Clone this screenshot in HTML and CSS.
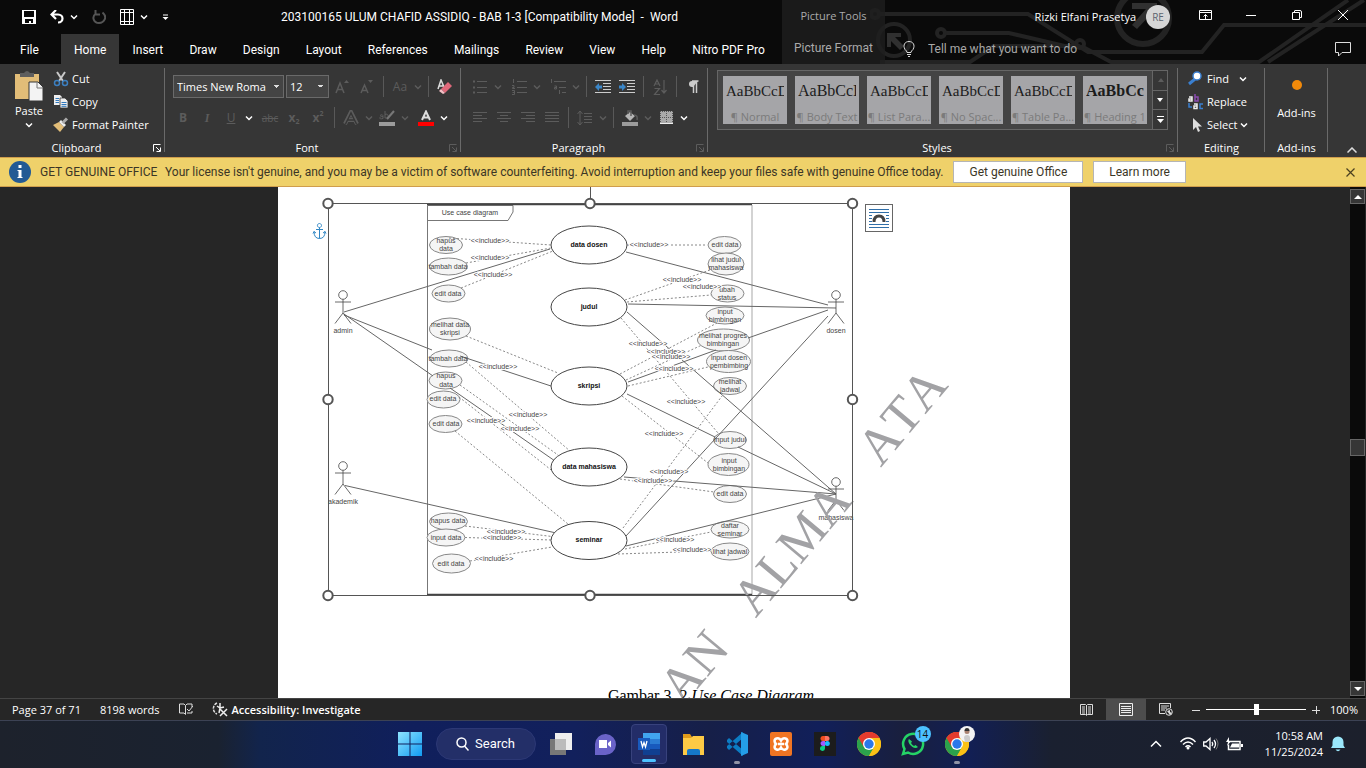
FILE: index.html
```html
<!DOCTYPE html>
<html lang="en">
<head>
<meta charset="utf-8">
<meta name="viewport" content="width=device-width, initial-scale=1">
<title>203100165 ULUM CHAFID ASSIDIQ - BAB 1-3 - Word</title>
<link rel="stylesheet" href="styles.css">
</head>
<body>
<svg class="defs" aria-hidden="true">
  <symbol id="chev" viewBox="0 0 8 8"><path d="M1 2.500l3 3 3-3" fill="none" stroke="currentColor" stroke-width="1.500"/></symbol>
  <symbol id="launch" viewBox="0 0 8 8"><path d="M.5 7.500V.5h7M3 3l4 4M7.500 3.500v4h-4" fill="none" stroke="currentColor"/></symbol>
  <symbol id="actor" viewBox="0 0 20 36" overflow="visible"><g fill="none" stroke="#444" stroke-width=".8"><circle cx="10" cy="5" r="4.300"/><path d="M10 9.300V23M2 12h16M10 23l-8 10.500M10 23l8 10.500"/></g></symbol>
  <symbol id="chrome" viewBox="0 0 24 24"><circle cx="12" cy="12" r="12" fill="#fbc116"/><path d="M12 12L1.600 6A12 12 0 0 1 22.400 6z" fill="#e33b2e"/><path d="M1.600 6a12 12 0 0 0 10.400 18L17.200 15 12 12z" fill="#2ba24c"/><path d="M1.600 6L6.800 15l5-3L12 6h10.400A12 12 0 0 0 1.600 6z" fill="#e33b2e"/><path d="M22.400 6H12l5.200 9L12 24A12 12 0 0 0 22.400 6z" fill="#fbc116"/><circle cx="12" cy="12" r="6" fill="#fff"/><circle cx="12" cy="12" r="4.700" fill="#2a78ea"/></symbol>
</svg>

<header class="header">
  <svg class="circuit" viewBox="0 0 496 64" aria-hidden="true">
    <g fill="none" stroke="#232323" stroke-width="4">
      <circle cx="24" cy="40" r="16"/><circle cx="273" cy="18" r="26" stroke-width="6"/>
      <path d="M10 14h148l60 38h114l22-27h142M76 33h63l60 14h14l28 15h148L478 0M398 62L494 0M36 14l-26 0M10 62h90l24-16h82"/>
      <circle cx="71" cy="33" r="4"/><circle cx="210" cy="44" r="4"/><circle cx="5" cy="14" r="4"/>
    </g>
    <path d="M17 33h14v4h-6l9 9-4 4-9-9v6h-4zM262 3h25v24h-5V13l-15 16-5-4 14-16h-14z" fill="#303030"/>
  </svg>
  <div class="head-main">
    <div class="title-row">
      <div class="quick">
        <button aria-label="Save"><svg width="14" height="14" viewBox="0 0 14 14"><path d="M0 0h14v14H0z" fill="#fff"/><path d="M2 1h10v6H2zM3 9h8v4H9v-2H7v2H3z" fill="#0a0a0a"/></svg></button>
        <button class="undo" aria-label="Undo"><svg width="14" height="14" viewBox="0 0 14 14"><path d="M6 0L1.500 4.500 6 9M2 4.500h6c6 0 6 8 0 8" fill="none" stroke="#fff" stroke-width="2.200"/></svg><svg width="8" height="8"><use href="#chev"/></svg></button>
        <button aria-label="Repeat" disabled><svg width="14" height="14" viewBox="0 0 14 14"><path d="M3.500 0v4.500H8M4 3.500C-1 7 2 13 7 13s9-6 3.500-10.500" fill="none" stroke="#555" stroke-width="2"/></svg></button>
        <button class="grid-btn" aria-label="Table"><svg width="14" height="16" viewBox="0 0 14 16"><path d="M.5 .5h13v15H.5zM4.500 0v16M9.500 0v16M0 3.500h14M0 12.500h14" fill="none" stroke="#fff"/></svg><svg width="8" height="8"><use href="#chev"/></svg></button>
        <button aria-label="Customize Quick Access Toolbar"><svg width="7" height="7" viewBox="0 0 7 7"><path d="M1 1h5" stroke="#fff"/><path d="M.5 3h6l-3 3z" fill="#fff"/></svg></button>
      </div>
      <h1 class="doc-title">203100165 ULUM CHAFID ASSIDIQ - BAB 1-3 [Compatibility Mode]&nbsp; -&nbsp; Word</h1>
    </div>
    <nav class="tabs">
      <a href="#file" class="file">File</a><a href="#home" class="active">Home</a><a href="#insert">Insert</a><a href="#draw">Draw</a><a href="#design">Design</a><a href="#layout">Layout</a><a href="#references">References</a><a href="#mailings">Mailings</a><a href="#review">Review</a><a href="#view">View</a><a href="#help">Help</a><a href="#nitro">Nitro PDF Pro</a>
    </nav>
  </div>
  <div class="picture-tools"><span>Picture Tools</span><a href="#format">Picture Format</a></div>
  <div class="head-right">
    <div class="account-row">
      <span class="user">Rizki Elfani Prasetya</span><span class="avatar">RE</span>
      <div class="win-buttons">
        <button aria-label="Ribbon Display Options"><svg width="13" height="10" viewBox="0 0 13 10"><path d="M.5 .5h12v9H.5zM.5 2.500h12M6.500 9V4.500M4.500 6.500l2-2 2 2" fill="none" stroke="#fff"/></svg></button>
        <button aria-label="Minimize"><svg width="10" height="10"><path d="M0 5.500h10" stroke="#fff"/></svg></button>
        <button aria-label="Restore"><svg width="10" height="10" viewBox="0 0 10 10"><path d="M.5 2.500h7v7h-7zM2.500 2V1q0-.5 .5-.5h5Q9.500 .5 9.500 2v5.500H8" fill="none" stroke="#fff"/></svg></button>
        <button aria-label="Close"><svg width="10" height="10"><path d="M0 0l10 10M10 0L0 10" stroke="#fff"/></svg></button>
      </div>
    </div>
    <div class="tell-row">
      <svg width="12" height="16" viewBox="0 0 12 16"><path d="M4 11.500Q4 10 2 8.500C-.5 4 2 .5 6 .5s6.500 3.500 4 8Q8 10 8 11.500zM4 13.500h4M5 15.500h2" fill="none" stroke="#ddd"/></svg>
      <input type="text" aria-label="Tell me what you want to do" placeholder="Tell me what you want to do">
      <button aria-label="Comments"><svg width="16" height="15" viewBox="0 0 16 15"><path d="M.5 .5h15v10H7l-3.500 3.500v-3.500h-3z" fill="none" stroke="#ddd"/></svg></button>
    </div>
  </div>
</header>

<section class="ribbon">
  <div class="group clipboard">
    <div class="body">
      <button class="paste"><svg width="28" height="30" viewBox="0 0 28 30"><path d="M0 3h24v25H0z" fill="#e2bd78"/><path d="M5 6V2h4q3-4 6 0h4v4z" fill="#5e5e5e"/><path d="M14 11h9l5 5v14H14z" fill="#f3f3f3" stroke="#363636"/><path d="M22 11v6h6" fill="none" stroke="#777"/></svg><span>Paste</span><svg width="8" height="8"><use href="#chev"/></svg></button>
      <div class="stack">
        <button><svg width="16" height="16" viewBox="0 0 16 16"><path d="M4 1l6 9M12 1L6 10" stroke="#c8c8c8" stroke-width="2"/><circle cx="4" cy="12" r="2.500" fill="none" stroke="#3c7fc0" stroke-width="1.500"/><circle cx="12" cy="12" r="2.500" fill="none" stroke="#3c7fc0" stroke-width="1.500"/></svg>Cut</button>
        <button><svg width="16" height="16" viewBox="0 0 16 16"><path d="M1 1h6l2 2v8H1z" fill="#eee"/><path d="M7 4h5l3 3v7H7z" fill="#eee" stroke="#363636" stroke-width=".8"/><path d="M2.500 4.500H6M2.500 6.500H6M2.500 8.500H6M8.500 8.500h5M8.500 10.500h5M8.500 12.300h5" stroke="#2f78bd"/></svg>Copy</button>
        <button><svg width="16" height="16" viewBox="0 0 16 16"><path d="M0 8l6-3 5 5-4 5z" fill="#e2bd78"/><path d="M6 5l2-2 5 5-2 2z" fill="#eee"/><path d="M9.500 6L14 1.500" stroke="#aaa" stroke-width="3"/></svg>Format Painter</button>
      </div>
    </div>
    <div class="caption"><span>Clipboard</span><button aria-label="Clipboard settings"><svg width="8" height="8"><use href="#launch"/></svg></button></div>
  </div>

  <div class="group font">
    <div class="body rows">
      <div class="row">
        <select class="face" aria-label="Font"><option>Times New Roma</option></select>
        <select class="size" aria-label="Font size"><option>12</option></select>
        <button class="ib off" aria-label="Grow font"><svg width="16" height="16" viewBox="0 0 16 16"><path d="M1 14l4-10 4 10M2.500 10.500h5" fill="none" stroke="currentColor" stroke-width="1.500"/><path d="M9 4l2.500-3L14 4z" fill="currentColor"/></svg></button>
        <button class="ib off" aria-label="Shrink font"><svg width="16" height="16" viewBox="0 0 16 16"><path d="M2 14l3.500-8L9 14M3 11.500h5" fill="none" stroke="currentColor" stroke-width="1.500"/><path d="M9 1l2.500 3L14 1z" fill="currentColor"/></svg></button>
        <i class="sep"></i>
        <button class="ib off case" aria-label="Change case">Aa</button><button class="cv off" aria-label="Case options"><svg width="8" height="8"><use href="#chev"/></svg></button>
        <i class="sep"></i>
        <button class="ib" aria-label="Clear formatting"><svg width="16" height="16" viewBox="0 0 16 16"><path d="M1 10L4 1l3 7M2 7h4" fill="none" stroke="#ddd" stroke-width="1.500"/><path d="M4 10l7-7 4 4-7 7z" fill="#e0697b"/><path d="M4 10l4 4-2 1-4-3z" fill="#f4c0c6"/></svg></button>
      </div>
      <div class="row">
        <button class="ib off b" aria-label="Bold">B</button><button class="ib off i" aria-label="Italic">I</button><button class="ib off u" aria-label="Underline">U</button><button class="cv" aria-label="Underline options"><svg width="8" height="8"><use href="#chev"/></svg></button>
        <button class="ib off s gap" aria-label="Strikethrough">abc</button><button class="ib off x" aria-label="Subscript">x<sub>2</sub></button><button class="ib off x" aria-label="Superscript">x<sup>2</sup></button>
        <i class="sep"></i>
        <button class="ib off" aria-label="Text effects"><svg width="16" height="16" viewBox="0 0 16 16"><path d="M2 14L8 2l6 12M5 10h6" fill="none" stroke="currentColor" stroke-width="4"/><path d="M2.500 14L8 3l5.500 11M5 10h6" fill="none" stroke="#363636" stroke-width="1.500"/></svg></button><button class="cv off" aria-label="Effect options"><svg width="8" height="8"><use href="#chev"/></svg></button>
        <button class="ib off" aria-label="Highlight"><svg width="16" height="16" viewBox="0 0 16 16"><path d="M1 5.500q3-2 3 1v2q-4 1-3-1t3-1M6 1v7q4 0 3-2.500t-3-1" fill="none" stroke="currentColor"/><path d="M15 1L8 9" stroke="#777" stroke-width="2"/><path d="M0 12h16v4H0z" fill="#9b9b9b"/></svg></button><button class="cv off" aria-label="Highlight options"><svg width="8" height="8"><use href="#chev"/></svg></button>
        <button class="ib gap" aria-label="Font colour"><svg width="16" height="16" viewBox="0 0 16 16"><path d="M4 10L8 1.500 12 10M5.500 7.500h5" fill="none" stroke="#ddd" stroke-width="2"/><path d="M0 12h16v4H0z" fill="#f00"/></svg></button><button class="cv" aria-label="Colour options"><svg width="8" height="8"><use href="#chev"/></svg></button>
      </div>
    </div>
    <div class="caption"><span>Font</span><button class="off" aria-label="Font settings"><svg width="8" height="8"><use href="#launch"/></svg></button></div>
  </div>

  <div class="group para">
    <div class="body rows">
      <div class="row">
        <button class="ib off" aria-label="Bullets"><svg width="16" height="16" viewBox="0 0 16 16"><path d="M5 2.500h10M5 8.500h10M5 13.500h10" stroke="currentColor"/><path d="M1 1.500h2v2H1zM1 7.500h2v2H1zM1 12.500h2v2H1z" fill="currentColor"/></svg></button><button class="cv off" aria-label="Bullet options"><svg width="8" height="8"><use href="#chev"/></svg></button>
        <button class="ib off gap" aria-label="Numbering"><svg width="16" height="16" viewBox="0 0 16 16"><path d="M6 2.500h10M6 8.500h10M6 13.500h10M2.500 0v4M1 6.500h2v2H1.500v1H4M1 11.500h2.500v4H1M1.500 13.500h2" fill="none" stroke="currentColor"/></svg></button><button class="cv off" aria-label="Number options"><svg width="8" height="8"><use href="#chev"/></svg></button>
        <button class="ib off gap" aria-label="Multilevel list"><svg width="16" height="16" viewBox="0 0 16 16"><path d="M4 2.500h12M9 8.500h7M12 13.500h4M1.500 0v4M4.500 7h2v3h-2V8.500h2M9.500 11v4" fill="none" stroke="currentColor"/></svg></button><button class="cv off" aria-label="Multilevel options"><svg width="8" height="8"><use href="#chev"/></svg></button>
        <i class="sep"></i>
        <button class="ib" aria-label="Decrease indent"><svg width="16" height="16" viewBox="0 0 16 16"><path d="M0 1.500h16M8 4.500h8M8 7.500h8M8 10.500h8M0 13.500h16" stroke="#ccc"/><path d="M4 4v2.500h3v3H4V12L0 8z" fill="#3a86c8"/></svg></button>
        <button class="ib" aria-label="Increase indent"><svg width="16" height="16" viewBox="0 0 16 16"><path d="M0 1.500h16M8 4.500h8M8 7.500h8M8 10.500h8M0 13.500h16" stroke="#ccc"/><path d="M3 4v2.500H0v3h3V12l4-4z" fill="#3a86c8"/></svg></button>
        <i class="sep"></i>
        <button class="ib off" aria-label="Sort"><svg width="16" height="16" viewBox="0 0 16 16"><path d="M2 7l3-6 3 6M3 5h4M2.500 9.500h5l-5 6H8M12 1v13M9.500 11l2.500 3 2.500-3" fill="none" stroke="currentColor" stroke-width="1.200"/></svg></button>
        <i class="sep"></i>
        <button class="ib" aria-label="Show marks"><svg width="12" height="14" viewBox="0 0 12 14"><path d="M11 1H5a3 3 0 0 0 0 6h1" fill="#ccc"/><path d="M6.500 13V1M9.500 13V1M11.500 1H5" stroke="#ccc" stroke-width="1.500"/></svg></button>
      </div>
      <div class="row">
        <button class="ib off" aria-label="Align left"><svg width="14" height="12"><path d="M0 .5h14M0 3.500h9M0 6.500h14M0 9.500h9" stroke="currentColor"/></svg></button>
        <button class="ib off" aria-label="Center"><svg width="14" height="12"><path d="M0 .5h14M3 3.500h8M0 6.500h14M3 9.500h8" stroke="currentColor"/></svg></button>
        <button class="ib off" aria-label="Align right"><svg width="14" height="12"><path d="M0 .5h14M5 3.500h9M0 6.500h14M5 9.500h9" stroke="currentColor"/></svg></button>
        <button class="ib off" aria-label="Justify"><svg width="14" height="12"><path d="M0 .5h14M0 3.500h14M0 6.500h14M0 9.500h14" stroke="currentColor"/></svg></button>
        <i class="sep"></i>
        <button class="ib off" aria-label="Line spacing"><svg width="16" height="16" viewBox="0 0 16 16"><path d="M7 3.500h8M7 6.500h8M7 9.500h8M7 12.500h8M3 1v14M.5 4L3 1l2.500 3M.5 12L3 15l2.500-3" fill="none" stroke="currentColor"/></svg></button><button class="cv off" aria-label="Spacing options"><svg width="8" height="8"><use href="#chev"/></svg></button>
        <i class="sep"></i>
        <button class="ib off" aria-label="Shading"><svg width="16" height="16" viewBox="0 0 16 16"><path d="M3 6l5-4 5 4-5 5z" fill="#b5b5b5"/><path d="M6 4V1h3v5M12 5q4 0 3 5" fill="none" stroke="currentColor" stroke-width="1.500"/><path d="M0 12h16v4H0z" fill="#9b9b9b"/></svg></button><button class="cv off" aria-label="Shading options"><svg width="8" height="8"><use href="#chev"/></svg></button>
        <button class="ib" aria-label="Borders"><svg width="13" height="13" viewBox="0 0 13 13"><path d="M0 0h13v13H0z" fill="#aaa"/><path d="M0 .5h13M0 6.500h13M.5 0v12M6.500 0v12M12.500 0v12" stroke="#555" stroke-dasharray="1 1"/><path d="M0 12.500h13" stroke="#eee"/></svg></button><button class="cv" aria-label="Border options"><svg width="8" height="8"><use href="#chev"/></svg></button>
      </div>
    </div>
    <div class="caption"><span>Paragraph</span><button class="off" aria-label="Paragraph settings"><svg width="8" height="8"><use href="#launch"/></svg></button></div>
  </div>

  <div class="group styles">
    <div class="body">
      <div class="gallery">
        <button class="style"><b>AaBbCcD</b><span>¶ Normal</span></button>
        <button class="style big"><b>AaBbCcI</b><span>¶ Body Text</span></button>
        <button class="style"><b>AaBbCcD</b><span>¶ List Para...</span></button>
        <button class="style"><b>AaBbCcD</b><span>¶ No Spac...</span></button>
        <button class="style"><b>AaBbCcD</b><span>¶ Table Pa...</span></button>
        <button class="style big heavy"><b>AaBbCcI</b><span>¶ Heading 1</span></button>
        <div class="spin">
          <button class="off" aria-label="Row up"><svg width="7" height="4"><path d="M1 4h6L4 0z" fill="currentColor"/></svg></button>
          <button aria-label="Row down"><svg width="7" height="4"><path d="M0 0h6L3 4z" fill="currentColor"/></svg></button>
          <button aria-label="More styles"><svg width="7" height="7"><path d="M0 0h7v1H0zM0 3h7L3.500 7z" fill="currentColor"/></svg></button>
        </div>
      </div>
    </div>
    <div class="caption"><span>Styles</span><button class="off" aria-label="Styles settings"><svg width="8" height="8"><use href="#launch"/></svg></button></div>
  </div>

  <div class="group editing">
    <div class="body"><div class="stack">
      <button><svg width="16" height="16" viewBox="0 0 16 16"><path d="M7 8l-6 5" stroke="#3a7fd0" stroke-width="3"/><circle cx="9" cy="5" r="4" fill="#fff" stroke="#3a7fd0" stroke-width="1.500"/></svg>Find<svg class="far" width="8" height="8"><use href="#chev"/></svg></button>
      <button><svg width="16" height="16" viewBox="0 0 16 16" fill="none" stroke-width="1.500"><path d="M1 3h3v4H1V5h3" stroke="#eee"/><path d="M7 0v7h3V3H7" stroke="#8a4bb0"/><path d="M6 10h3v4.500H6V12h3" stroke="#eee"/><path d="M15 10h-3v4.500h3M1 9v4h3" stroke="#3a7fd0"/></svg>Replace</button>
      <button><svg width="16" height="16" viewBox="0 0 16 16"><path d="M5 1v12l3-3 2 5 2-1-2-4.500h4z" fill="#ddd"/></svg>Select<svg class="near" width="8" height="8"><use href="#chev"/></svg></button>
    </div></div>
    <div class="caption"><span>Editing</span></div>
  </div>

  <div class="group addins">
    <div class="body"><button><svg width="12" height="12"><circle cx="6" cy="6" r="5" fill="#f28a0a"/></svg><span>Add-ins</span></button></div>
    <div class="caption"><span>Add-ins</span></div>
  </div>
  <button class="collapse" aria-label="Collapse ribbon"><svg width="10" height="6"><path d="M.5 5.500L5 1l4.500 4.500" fill="none" stroke="#ddd" stroke-width="1.500"/></svg></button>
</section>

<section class="notice">
  <svg width="22" height="22" viewBox="0 0 22 22"><circle cx="11" cy="11" r="11" fill="#235a94"/><path d="M9.500 4h3v3h-3zM8.500 9h4v7h1v1h-5v-1h1v-6h-1z" fill="#fff"/></svg>
  <strong>GET GENUINE OFFICE</strong>
  <p>Your license isn't genuine, and you may be a victim of software counterfeiting. Avoid interruption and keep your files safe with genuine Office today.</p>
  <button class="act first">Get genuine Office</button><button class="act">Learn more</button>
  <button class="dismiss" aria-label="Close message"><svg width="9" height="9"><path d="M.5 .5l8 8M8.500 .5l-8 8" stroke="#4a4020" stroke-width="1.200"/></svg></button>
</section>

<main class="workspace">
  <div class="desk">
    <article class="page">
      <figure>
        <svg class="diagram" viewBox="278 187 792 500" role="img" aria-label="Use case diagram">
          <g class="frame">
            <path d="M427.500 595V205.500h85.500V212l-5 8.500h-81"/>
            <path d="M752 205v390" stroke="#c4c4c4" stroke-width="1.500"/>
            <path d="M427 204.500h325M427 594.500h325" stroke="#444" stroke-width="1.500"/>
          </g>
          <text class="t" x="470" y="215">Use case diagram</text>
          <g class="small">
            <ellipse cx="446" cy="245" rx="16.500" ry="8.500"/><ellipse cx="448.500" cy="266.500" rx="19" ry="8.500"/><ellipse cx="448.500" cy="293.500" rx="16.500" ry="8.500"/><ellipse cx="450" cy="329" rx="20.500" ry="11"/><ellipse cx="449" cy="358.500" rx="19" ry="8.500"/><ellipse cx="445.500" cy="380.500" rx="16.500" ry="8.500"/><ellipse cx="443.500" cy="399.500" rx="16.500" ry="8.500"/><ellipse cx="445.500" cy="424" rx="16.500" ry="8.500"/><ellipse cx="448.500" cy="521.500" rx="19" ry="8.500"/><ellipse cx="446" cy="537.500" rx="19" ry="8.500"/><ellipse cx="451.500" cy="563.500" rx="19" ry="9.500"/>
            <ellipse cx="724.500" cy="245" rx="16.500" ry="8.500"/><ellipse cx="726" cy="264" rx="18" ry="11"/><ellipse cx="727.500" cy="293.500" rx="16.500" ry="8.500"/><ellipse cx="725" cy="315.500" rx="19" ry="8.500"/><ellipse cx="723.500" cy="340" rx="26" ry="11"/><ellipse cx="728.500" cy="361.500" rx="22" ry="11"/><ellipse cx="730" cy="386" rx="16.500" ry="8.500"/><ellipse cx="730" cy="440" rx="16.500" ry="8.500"/><ellipse cx="728.500" cy="464.500" rx="20.500" ry="11"/><ellipse cx="730" cy="494" rx="16.500" ry="8.500"/><ellipse cx="730" cy="529.500" rx="19" ry="8.500"/><ellipse cx="730" cy="551.500" rx="19" ry="8.500"/>
          </g>
          <path class="solid" d="M344 312L550 249M344 315L432 350M460 356L551 386M344 314L433 376M450 388L555 461M345 485.500L554 532.500M626 252L828 305M628 304L836 308M828 310L748 338M716 350L628 382M828 316L626 536M836 494L627 312M836 494L738 447M715 437L627 394M836 494L624 477M836 494L626 546"/>
          <path class="dash" d="M449 238L551 245M466 263L551 248M461 288L553 251M466 336L558 373M466 362L570 451M460 385L558 455M459 397L555 473M455 431L568 524M465 526L552 536.500M465 537.500L552 540M470 561L552 547M627 245H707M625 300L710 270M627 302L711 295M621 318L718 433M620 374L717 323M626 380L702 345M628 386L708 367M622 396L708 463M623 528L722 396M620 479L714 492M625 549L711 532M618 554L711 551"/>
          <g class="big-e"><ellipse cx="589" cy="245" rx="38" ry="19"/><ellipse cx="589" cy="307" rx="38" ry="19"/><ellipse cx="589" cy="386" rx="38" ry="19"/><ellipse cx="589" cy="467" rx="38" ry="19"/><ellipse cx="589" cy="540.500" rx="38" ry="19"/></g>
          <g class="t bold"><text x="589" y="247">data dosen</text><text x="589" y="309">judul</text><text x="589" y="388">skripsi</text><text x="589" y="469">data mahasiswa</text><text x="589" y="542">seminar</text></g>
          <g class="t">
            <text x="446" y="243">hapus</text><text x="446" y="251">data</text><text x="448" y="269">tambah data</text><text x="448" y="296">edit data</text><text x="450" y="327">melihat data</text><text x="450" y="335">skripsi</text><text x="448" y="361">tambah data</text><text x="446" y="378">hapus</text><text x="446" y="387">data</text><text x="443" y="401">edit data</text><text x="446" y="426">edit data</text><text x="448" y="523">hapus data</text><text x="446" y="540">input data</text><text x="451" y="566">edit data</text>
            <text x="725" y="247">edit data</text><text x="726" y="262">lihat judul</text><text x="726" y="270">mahasiswa</text><text x="727" y="292">ubah</text><text x="727" y="300">status</text><text x="725" y="314">input</text><text x="725" y="322">bimbingan</text><text x="723" y="338">melihat progres</text><text x="723" y="346">bimbingan</text><text x="729" y="360">input dosen</text><text x="729" y="368">pembimbing</text><text x="730" y="384">melihat</text><text x="730" y="392">jadwal</text><text x="730" y="442">input judul</text><text x="729" y="463">input</text><text x="729" y="471">bimbingan</text><text x="730" y="496">edit data</text><text x="730" y="528">daftar</text><text x="730" y="536">seminar</text><text x="730" y="554">lihat jadwal</text>
          </g>
          <g class="t inc">
            <text x="490" y="243">&lt;&lt;include&gt;&gt;</text><text x="490" y="260">&lt;&lt;include&gt;&gt;</text><text x="493" y="277">&lt;&lt;include&gt;&gt;</text><text x="498" y="369">&lt;&lt;include&gt;&gt;</text><text x="528" y="417">&lt;&lt;include&gt;&gt;</text><text x="486" y="423">&lt;&lt;include&gt;&gt;</text><text x="520" y="431">&lt;&lt;include&gt;&gt;</text><text x="502" y="540">&lt;&lt;include&gt;&gt;</text><text x="506" y="534">&lt;&lt;include&gt;&gt;</text><text x="494" y="561">&lt;&lt;include&gt;&gt;</text>
            <text x="649" y="247">&lt;&lt;include&gt;&gt;</text><text x="682" y="282">&lt;&lt;include&gt;&gt;</text><text x="702" y="289">&lt;&lt;include&gt;&gt;</text><text x="648" y="346">&lt;&lt;include&gt;&gt;</text><text x="666" y="354">&lt;&lt;include&gt;&gt;</text><text x="671" y="359">&lt;&lt;include&gt;&gt;</text><text x="674" y="371">&lt;&lt;include&gt;&gt;</text><text x="686" y="404">&lt;&lt;include&gt;&gt;</text><text x="664" y="436">&lt;&lt;include&gt;&gt;</text><text x="669" y="474">&lt;&lt;include&gt;&gt;</text><text x="653" y="483">&lt;&lt;include&gt;&gt;</text><text x="675" y="542">&lt;&lt;include&gt;&gt;</text><text x="692" y="552">&lt;&lt;include&gt;&gt;</text>
          </g>
          <use href="#actor" x="333" y="290" width="20" height="36"/><use href="#actor" x="826" y="290" width="20" height="36"/><use href="#actor" x="333" y="461" width="20" height="36"/><use href="#actor" x="826" y="477" width="20" height="36"/>
          <g class="t"><text x="343" y="333">admin</text><text x="836" y="333">dosen</text><text x="343" y="504">akademik</text><text x="836" y="520">mahasiswa</text></g>
          <g class="watermark">
            <text transform="translate(915 427) rotate(-50)">ATA</text>
            <text transform="translate(805 560) rotate(-50)">ALMA</text>
            <text transform="translate(707 678) rotate(-50)">AN</text>
          </g>
          <g class="selection"><path d="M590.500 187v17M328.500 203.500h524v392h-524z" stroke-width="1"/><g class="knob"><circle cx="328" cy="203.500" r="4.700"/><circle cx="590" cy="203.500" r="4.700"/><circle cx="852.500" cy="203.500" r="4.700"/><circle cx="328" cy="399.500" r="4.700"/><circle cx="852.500" cy="399.500" r="4.700"/><circle cx="328" cy="595.500" r="4.700"/><circle cx="590" cy="595.500" r="4.700"/><circle cx="852.500" cy="595.500" r="4.700"/></g></g>
          <path class="anchor" d="M319.500 227.500v11M316 229.500h7M314 231.500q0 7 5.500 7t5.500-7M313 233.500l1-2 2 1.500M326 233.500l-1-2-2 1.500M319.500 223.500a2 2 0 1 1-.1 0"/>
        </svg>
        <button class="layout-opt" aria-label="Layout options"><svg width="22" height="22" viewBox="0 0 22 22"><path d="M1 2.500h20M1 5.500h20M1 8.500h3M18 8.500h3M1 11.500h3M18 11.500h3M1 14.500h3M18 14.500h3M1 17.500h20M1 20.500h20" stroke="#2f6ea8"/><path d="M6 15q0-6 5-6t5 6" fill="none" stroke="#444" stroke-width="3"/></svg></button>
        <figcaption>Gambar 3. 2 <em>Use Case Diagram</em></figcaption>
      </figure>
    </article>
  </div>
  <div class="scroll">
    <button aria-label="Scroll up"><svg width="8" height="4"><path d="M0 4h8L4 0z" fill="#fff"/></svg></button>
    <i class="thumb"></i>
    <button class="down" aria-label="Scroll down"><svg width="8" height="4"><path d="M0 0h8L4 4z" fill="#fff"/></svg></button>
  </div>
</main>

<footer class="status">
  <span>Page 37 of 71</span><span>8198 words</span>
  <button class="proof" aria-label="Proofing"><svg width="14" height="13" viewBox="0 0 14 13"><path d="M6.500 11.500L5 10H.5V1H5l1.500 1.500zM6.500 2.500L8 1h5v3M13 8v2H8M8 6l2 2 4-5" fill="none" stroke="#ddd"/></svg></button>
  <button class="access"><svg width="17" height="16" viewBox="0 0 17 16"><path d="M5 1a6 6 0 0 0 0 11" fill="none" stroke="#ddd" stroke-width="1.500" stroke-dasharray="3 1"/><path d="M5 4l3 2 4-1M8 1v5l-1 5M8 7l7 7M15 7l-7 7" fill="none" stroke="#eee" stroke-width="1.500"/></svg>Accessibility: Investigate</button>
  <div class="views">
    <button aria-label="Read mode"><svg width="13" height="12" viewBox="0 0 13 12"><path d="M.5 .5h5l1 1 1-1h5v10h-5l-1 1-1-1h-5zM6.500 1v10M2 3h3M2 5h3M2 7h3M2 9h3M8 3h3M8 5h3M8 7h3M8 9h3" fill="none" stroke="#ddd"/></svg></button>
    <button class="on" aria-label="Print layout"><svg width="14" height="13" viewBox="0 0 14 13"><path d="M.5 .5h13v12H.5zM2 3.500h10M2 5.500h10M2 7.500h10M2 9.500h10" fill="none" stroke="#eee"/></svg></button>
    <button aria-label="Web layout"><svg width="14" height="13" viewBox="0 0 14 13"><path d="M6 10.500H.5V.5h11V5M2 3h8M2 5h6M2 7h4" fill="none" stroke="#ddd"/><circle cx="10" cy="9" r="3.300" fill="none" stroke="#ddd"/><path d="M8 8l3-1v2l2 1-2 2z" fill="#ddd"/></svg></button>
    <button class="zoom" aria-label="Zoom out"><svg width="8" height="8"><path d="M0 4.500h8" stroke="#ddd"/></svg></button>
    <input type="range" aria-label="Zoom" min="0" max="100" value="50">
    <button class="zoom" aria-label="Zoom in"><svg width="8" height="8"><path d="M0 4.500h8M4.500 0v8" stroke="#ddd"/></svg></button>
    <span class="pct">100%</span>
  </div>
</footer>

<nav class="taskbar">
  <span></span>
  <div class="apps">
    <button aria-label="Start"><svg width="24" height="24" viewBox="0 0 24 24"><defs><linearGradient id="w" x2="1" y2="1"><stop stop-color="#8ee4ff"/><stop offset="1" stop-color="#119bf2"/></linearGradient></defs><path d="M0 0h11.500v11.500H0zM12.500 0H24v11.500H12.500zM0 12.500h11.500V24H0zM12.500 12.500H24V24H12.500z" fill="url(#w)"/></svg></button>
    <button class="search"><svg width="13" height="14" viewBox="0 0 13 14"><circle cx="5.500" cy="5.500" r="4.500" fill="none" stroke="#fff" stroke-width="1.500"/><path d="M8.500 9l4 4.500" stroke="#fff" stroke-width="1.500"/></svg>Search</button>
    <button aria-label="Task view"><svg width="22" height="24" viewBox="0 0 22 24"><path d="M5 1h17v17H5z" fill="#eee"/><path d="M0 7h16v16H0z" fill="#777"/><path d="M5 7h11v11H5z" fill="#bbb"/></svg></button>
    <button aria-label="Chat"><svg width="22" height="24" viewBox="0 0 22 24"><path d="M1 23V12a10.500 10.500 0 1 1 10 11z" fill="#6a63c8"/><path d="M5 8h8v8H5zM14 11l3-2.500v7L14 13z" fill="#fff"/></svg></button>
    <button class="current" aria-label="Word"><svg width="22" height="22" viewBox="0 0 22 22"><path d="M5 0h17v6H5z" fill="#41a5ee"/><path d="M5 6h17v5H5z" fill="#2b7cd3"/><path d="M5 11h17v5H5z" fill="#185abd"/><path d="M5 16h17v6H5z" fill="#103f91"/><path d="M0 5h12v12H0z" fill="#185abd"/><path d="M3 8l1.500 6L6 9.500 7.500 14 9 8" fill="none" stroke="#fff" stroke-width="1.300"/></svg></button>
    <button aria-label="File Explorer"><svg width="22" height="22" viewBox="0 0 22 22"><path d="M1 1h7l2 3v4H1z" fill="#e09b1a"/><path d="M1 5l8 0 2-2h11v19H1z" fill="#fdca45"/><path d="M5 22v-4q0-2 2-2h9q2 0 2 2v4z" fill="#1578c9"/></svg></button>
    <button class="open" aria-label="Visual Studio Code"><svg width="22" height="24" viewBox="0 0 22 24"><path d="M1 8l2-2 14 12v6L1 10zM1 16l2 2L17 6V0L1 14z" fill="#0c7cc4"/><path d="M15 0l7 3v18l-7 3z" fill="#249ee8"/></svg></button>
    <button aria-label="XAMPP"><svg width="24" height="24" viewBox="0 0 24 24"><rect x="1" width="22" height="24" rx="2" fill="#f07523"/><path d="M7.500 6.500q3-1 4.500 2 1.500-3 4.500-2c3 1 2 4 .5 5.500 1.500 1.500 2.500 4.500-.5 5.500q-3 1-4.500-2-1.500 3-4.500 2c-3-1-2-4-.5-5.500-1.500-1.500-2.500-4.500 .5-5.500zM9 12h6" fill="none" stroke="#fff" stroke-width="2.500"/></svg></button>
    <button aria-label="Figma"><svg width="22" height="24" viewBox="0 0 22 24"><path d="M0 0h22v24H0z" fill="#1c1c1c"/><path d="M11 4H9a2.500 2.500 0 0 0 0 5h2z" fill="#f24e1e"/><path d="M11 4h2a2.500 2.500 0 0 1 0 5h-2z" fill="#ff7262"/><path d="M11 9H9a2.500 2.500 0 0 0 0 5h2z" fill="#a259ff"/><circle cx="13.300" cy="11.500" r="2.500" fill="#1abcfe"/><path d="M11 14H9a2.500 2.500 0 1 0 2 2.500z" fill="#0acf83"/></svg></button>
    <button aria-label="Chrome"><svg width="24" height="24"><use href="#chrome"/></svg></button>
    <button aria-label="WhatsApp"><svg width="24" height="24" viewBox="0 0 24 24"><path d="M2 22l1.500-5A10 10 0 1 1 7 20.500z" fill="none" stroke="#25d366" stroke-width="2.500"/><path d="M8 7c-3 3 5 12 9 8l-2.500-2-1.500 1q-2-1-3-3l1-1.500z" fill="#25d366"/></svg><span class="badge">14</span></button>
    <button class="open" aria-label="Chrome profile"><svg width="24" height="24"><use href="#chrome"/></svg><span class="badge face-badge"><svg width="16" height="16" viewBox="0 0 16 16"><circle cx="8" cy="8" r="8" fill="#f4f4f4"/><path d="M5 12q0-3 3-3t3 3v4H6z" fill="#ccc"/><circle cx="8" cy="5.500" r="2.500" fill="#a98270"/><path d="M5.500 5q0-3 2.500-3t2.500 3z" fill="#333"/></svg></span></button>
  </div>
  <div class="tray">
    <button aria-label="Hidden icons"><svg width="12" height="8"><path d="M1 6.500l5-5 5 5" fill="none" stroke="#fff" stroke-width="1.500"/></svg></button>
    <button class="net" aria-label="Network, volume and battery">
      <svg width="16" height="13" viewBox="0 0 16 13"><path d="M.5 5q7.500-8 15 0M3 7.500q5-5 10 0M5.500 10q2.500-2.500 5 0" fill="none" stroke="#fff" stroke-width="1.500"/><circle cx="8" cy="11" r="1.500" fill="#fff"/></svg>
      <svg width="16" height="14" viewBox="0 0 16 14"><path d="M.7 5H3l4-3.500v11L3 9H.7zM9 5q1.500 2 0 4M11 3q3 4 0 8" fill="none" stroke="#fff" stroke-width="1.300"/><path d="M13 1.500q4 5 0 11" fill="none" stroke="#777"/></svg>
      <svg width="17" height="14" viewBox="0 0 17 14"><path d="M3 4.500h11v8H2.500v-5" fill="none" stroke="#fff" stroke-width="1.500"/><path d="M6 6.500h7v4H4zM15 7h2v3h-2zM3 0L0 5h2L1 9l4-5H3z" fill="#fff"/></svg>
    </button>
    <time><span>10:58 AM</span><span>11/25/2024</span></time>
    <button aria-label="Notifications"><svg width="14" height="16" viewBox="0 0 14 16"><path d="M0 12l1.500-2.500V6a5.500 5.500 0 0 1 11 0v3.500L14 12zM4.500 13.500h5q-2.500 3.500-5 0z" fill="#9be7fb"/></svg></button>
  </div>
</nav>
</body>
</html>
```
FILE: styles.css
```css
* { box-sizing: border-box; }
html, body { height: 100%; }
body {
  margin: 0;
  display: flex;
  flex-direction: column;
  background: #262626;
  color: #fff;
  font: 11px/16px "Open Sans", "Noto Sans", sans-serif;
  overflow: hidden;
}
button, input, select { font: inherit; color: inherit; margin: 0; }
button { background: none; border: 0; padding: 0; display: flex; align-items: center; justify-content: center; white-space: nowrap; }
a { color: inherit; text-decoration: none; }
svg { display: block; flex: none; }
.defs { position: absolute; width: 0; height: 0; }

/* header */
.header { position: relative; flex: none; display: flex; height: 64px; background: #0a0a0a; }
.circuit { position: absolute; right: 0; top: 0; width: 496px; height: 64px; }
.head-main { width: 782px; display: flex; flex-direction: column; }
.title-row { display: flex; align-items: center; height: 34px; }
.quick { width: 177px; padding-left: 22px; display: flex; align-items: center; gap: 14px; }
.quick button { gap: 6px; }
.doc-title { flex: 1; margin: 0; font: 400 12px/18px Roboto, sans-serif; text-align: center; white-space: nowrap; }
.tabs { flex: 1; display: flex; justify-content: space-between; padding: 0 4px 0 7px; }
.tabs a { display: flex; align-items: center; padding: 2px 13px 0; font: 12px/16px Roboto, sans-serif; white-space: nowrap; }
.tabs .active { background: #363636; }
.tabs .file { margin-right: 9px; }
.picture-tools { position: relative; width: 103px; display: flex; flex-direction: column; align-items: center; background: #1f1f1fd0; color: #aaa; }
.picture-tools span { height: 34px; line-height: 32px; }
.picture-tools a { font: 12px/32px Roboto, sans-serif; white-space: nowrap; }
.head-right { position: relative; flex: 1; display: flex; flex-direction: column; }
.account-row { display: flex; align-items: center; justify-content: flex-end; height: 34px; }
.avatar { width: 24px; height: 24px; margin-left: 10px; border-radius: 50%; background: #d6d6d6; color: #5c6570; text-align: center; line-height: 24px; font-size: 10px; }
.win-buttons { display: flex; margin-left: 12px; padding-bottom: 4px; }
.win-buttons button { width: 46px; height: 30px; }
.tell-row { display: flex; align-items: center; height: 30px; padding: 0 15px 0 18px; gap: 13px; }
.tell-row input { flex: 1; min-width: 0; height: 20px; padding: 0; border: 0; outline: 0; background: none; font: 12px/20px Roboto, sans-serif; }
.tell-row input::placeholder { color: #a8a8a8; opacity: 1; }

/* ribbon */
.ribbon { position: relative; flex: none; display: flex; height: 93px; background: #363636; }
.group { position: relative; display: flex; flex-direction: column; padding: 3px 0 2px; }
.group::after { content: ""; position: absolute; right: 0; top: 4px; bottom: 5px; width: 1px; background: #6a6a6a; }
.body { flex: 1; display: flex; }
.caption { display: flex; align-items: center; height: 14px; padding-right: 4px; }
.caption span { flex: 1; text-align: center; }
.off { color: #5c5c5c; }
.clipboard { width: 165px; }
.font { width: 296px; }
.para { width: 247px; }
.styles { flex: 1; }
.editing { width: 87px; }
.addins { width: 63px; }
.editing .caption, .addins .caption { padding: 0; }
.paste { width: 44px; margin-left: 7px; padding-top: 4px; flex-direction: column; justify-content: flex-start; gap: 2px; }
.stack { display: flex; flex-direction: column; }
.stack button { height: 23px; gap: 3px; justify-content: flex-start; }
.clipboard .stack { margin-left: 2px; }
.editing .stack { margin-left: 10px; }
.stack .far { margin-left: 7px; }
.rows { flex-direction: column; padding-top: 4px; }
.row { display: flex; align-items: center; height: 31px; }
.font .row { padding-left: 8px; }
.font .row + .row { padding-left: 6px; }
.para .row { padding-left: 7px; }
.row .sep { width: 1px; height: 21px; margin: 0 4px; background: #595959; }
.ib { width: 24px; height: 24px; font-size: 12px; }
.gap { margin-left: 3px; }
.cv { width: 12px; height: 24px; }
.row select {
  height: 23px; padding: 0 3px; border: 1px solid #6a6a6a; border-radius: 0; outline: 0; appearance: none;
  background: linear-gradient(45deg, #0000 50%, #ddd 50%) no-repeat right 7px center / 3px 3px, linear-gradient(-45deg, #0000 50%, #ddd 50%) no-repeat right 4px center / 3px 3px, #444;
}
.row .face { width: 111px; margin-right: 2px; }
.row .size { width: 43px; margin-right: 2px; }
.b { font-weight: 700; }
.i { font: italic 700 12px/16px "Liberation Serif", serif; }
.u { text-decoration: underline; }
.s { text-decoration: line-through; font-size: 10px; }
.x { font-weight: 700; }
.x sub, .x sup { font-size: 7px; line-height: 8px; }
.x sub { padding-top: 8px; }
.x sup { padding-bottom: 8px; }
.gallery { display: flex; height: 60px; margin: 3px 0 0 9px; padding-left: 5px; gap: 8px; align-items: center; border: 1px solid #666; background: #444; }
.gallery .spin { margin-left: -3px; }
.style { width: 64px; height: 48px; flex-direction: column; justify-content: space-between; padding: 4px 3px 0; overflow: hidden; background: #a5a5a8; }
.style b { width: 58px; overflow: hidden; color: #1c1c1c; font: 15px/22px "Liberation Serif", serif; text-align: left; }
.style.big b { font-size: 16px; }
.style.heavy b { font-weight: 700; }
.style span { color: #7b7b7b; line-height: 15px; }
.spin { width: 15px; height: 58px; display: flex; flex-direction: column; border-left: 1px solid #666; background: #363636; }
.spin button { flex: 1; }
.spin button + button { border-top: 1px solid #666; }
.addins .body button { flex: 1; flex-direction: column; justify-content: flex-start; padding-top: 12px; gap: 14px; }
.collapse { align-self: flex-end; justify-content: flex-end; width: 38px; margin-bottom: 4px; padding-right: 9px; }

/* notice */
.notice { flex: none; display: flex; align-items: center; height: 30px; padding: 0 11px 0 9px; border: solid #cf9d4c; border-width: 1px 0; background: #efd16a; color: #3b3626; font: 12px/18px Roboto, sans-serif; white-space: nowrap; }
.notice strong { width: 116px; margin: 0 9px; font-weight: 400; }
.notice p { margin: 0; }
.act { height: 22px; padding: 0 15px; margin-left: 10px; border: 1px solid #b5b5b5; background: #fff; }
.dismiss { margin-left: auto; }

/* document */
.workspace { flex: 1; min-height: 0; display: flex; overflow: hidden; }
.desk { flex: 1; display: flex; justify-content: center; overflow: hidden; }
.page { width: 792px; background: #fff; color: #000; overflow: hidden; }
figure { position: relative; margin: 0; }
.diagram { width: 100%; height: auto; overflow: visible; }
figcaption { padding-left: 74px; text-align: center; font: 16px/18px "Liberation Serif", serif; }
.layout-opt { position: absolute; left: 587px; top: 17px; width: 28px; height: 28px; border: 1px solid #666; background: #fff; }
.frame { fill: none; stroke: #777; stroke-width: 1; }
.t { font: 7px "Liberation Sans", sans-serif; fill: #444; text-anchor: middle; }
.bold { font-weight: 700; fill: #111; }
.inc { paint-order: stroke; stroke: #fff; stroke-width: 2; }
.small { fill: #f5f5f5; stroke: #888; stroke-width: 1; }
.big-e { fill: #fff; stroke: #444; stroke-width: 1; }
.solid { fill: none; stroke: #666; stroke-width: 1; }
.dash { fill: none; stroke: #888; stroke-width: 1; stroke-dasharray: 2 2; }
.watermark { font: 52px "Liberation Serif", serif; font-kerning: none; fill: #a2a2a5; text-anchor: middle; }
.selection { fill: none; stroke: #555; }
.knob { fill: #fff; stroke-width: 2; }
.anchor { fill: none; stroke: #2f86c4; }
.scroll { width: 18px; display: flex; flex-direction: column; padding: 2px 1px 2px 2px; background: linear-gradient(#0a0a0a, #0a0a0a) no-repeat 2px 0 / 15px 100%; }
.scroll button, .thumb { width: 15px; height: 15px; border: 1px solid #666; background: #363636; }
.thumb { height: 17px; margin-top: 235px; }
.down { margin-top: auto; }

/* status bar */
.status { flex: none; display: flex; align-items: center; height: 22px; padding: 0 8px 0 12px; border-top: 1px solid #444; background: #262626; line-height: 14px; }
.status > span { margin-right: 19px; }
.proof { margin-right: 19px; }
.access { gap: 3px; font-weight: 600; }
.views { display: flex; align-items: center; height: 100%; margin-left: auto; }
.views button { width: 40px; height: 100%; }
.views .on { background: #4d4d4d; }
.views .zoom { width: 20px; }
.views input { width: 100px; height: 12px; margin: 0; appearance: none; background: linear-gradient(#fff, #fff) no-repeat center / 100% 1px; }
.views input::-webkit-slider-thumb { appearance: none; width: 5px; height: 11px; background: #fff; }
.pct { margin-left: 4px; }

/* taskbar */
.taskbar { flex: none; display: grid; grid-template-columns: 1fr auto 1fr; align-items: center; height: 48px; padding-bottom: 2px; border-top: 1px solid #3c4254; background: linear-gradient(90deg, #1d222c 0, #1a2230 16%, #12244c 19%, #101f5c 30%, #12205c 42%, #161f48 52%, #111f5a 60%, #191f3e 66%, #121f54 71%, #1a2030 77%, #1c202c 100%); }
.apps { display: flex; align-items: center; }
.apps > button { position: relative; width: 44px; height: 42px; }
.apps .search { width: 100px; height: 32px; margin: 0 3px 0 4px; gap: 6px; border: 1px solid #2c3875; border-radius: 16px; background: #232f68; font: 13px/16px Roboto, sans-serif; }
.apps .current { width: 36px; height: 40px; margin: 0 4px; border: 1px solid #38427c; border-radius: 4px; background: #232d68; }
.current::after, .open::after { content: ""; position: absolute; bottom: 1px; left: 50%; width: 14px; height: 3px; margin-left: -7px; border-radius: 2px; background: #4cc2ff; }
.open::after { width: 6px; margin-left: -3px; background: #9093a5; }
.badge { position: absolute; right: 4px; top: 3px; width: 16px; height: 16px; border-radius: 50%; background: #4cc2ff; color: #111; font-size: 10px; line-height: 16px; text-align: center; }
.face-badge { background: none; }
.tray { display: flex; align-items: center; justify-content: flex-end; padding-right: 21px; gap: 8px; }
.net { gap: 7px; margin: 0 14px 0 10px; }
.tray time { display: flex; flex-direction: column; text-align: right; }
```
